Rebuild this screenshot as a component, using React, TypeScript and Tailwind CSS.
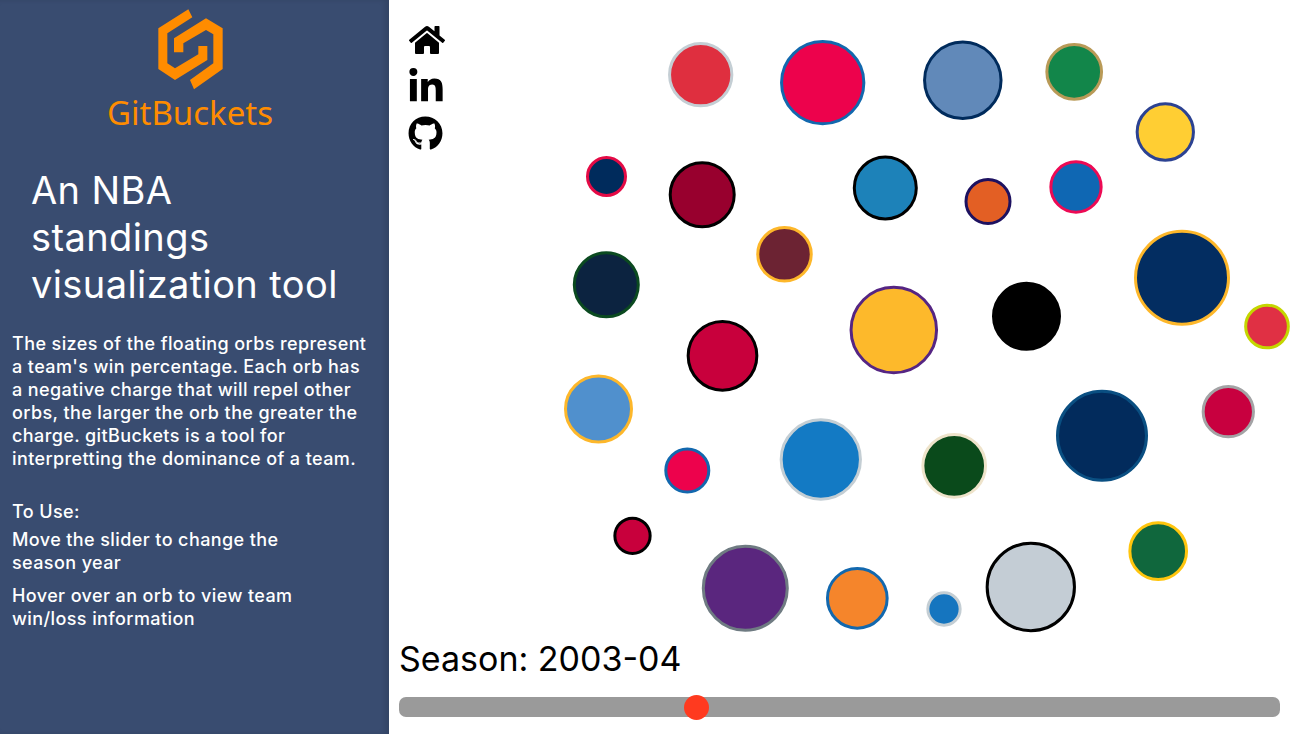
import { FaGithub, FaHome, FaLinkedinIn } from "react-icons/fa";

const FONT = "font-['Inter','Noto_Sans',sans-serif]";

// x/y are page coordinates minus the sidebar width, d is the outer diameter
const orbs = [
    { x: 311.7, y: 74.7, d: 65.3, fill: "#DF2F3F", stroke: "#C4CED4" },
    { x: 433.7, y: 82.7, d: 85.3, fill: "#ED024C", stroke: "#1268AE" },
    { x: 573.8, y: 80.3, d: 79.5, fill: "#6189B9", stroke: "#002B5C" },
    { x: 685.2, y: 71.8, d: 57.7, fill: "#12864A", stroke: "#B99A57" },
    { x: 776.3, y: 132, d: 59.3, fill: "#FFCE33", stroke: "#2C4292" },
    { x: 217.5, y: 176.5, d: 41, fill: "#002B5C", stroke: "#E40A45" },
    { x: 313.2, y: 194.8, d: 67, fill: "#98002E", stroke: "#000000" },
    { x: 496.3, y: 188, d: 65, fill: "#1D82B9", stroke: "#000000" },
    { x: 599, y: 201.5, d: 47, fill: "#E35F24", stroke: "#1D1160" },
    { x: 687, y: 187, d: 53.3, fill: "#0F67B3", stroke: "#ED0A54" },
    { x: 395.5, y: 254.3, d: 56.5, fill: "#6C2333", stroke: "#FDB72A" },
    { x: 217.3, y: 284.7, d: 67, fill: "#0C2340", stroke: "#0B4A20" },
    { x: 793, y: 277.7, d: 96, fill: "#032D61", stroke: "#FDB72A" },
    { x: 878, y: 326.5, d: 45.7, fill: "#E03044", stroke: "#C4D600" },
    { x: 504.8, y: 330, d: 88.5, fill: "#FDB92B", stroke: "#552583" },
    { x: 637.5, y: 316.3, d: 69, fill: "#000000", stroke: "#000000" },
    { x: 333.5, y: 355.8, d: 71.7, fill: "#C8003C", stroke: "#000000" },
    { x: 209.5, y: 409, d: 69, fill: "#5090CD", stroke: "#FDB72A" },
    { x: 298.3, y: 470.5, d: 46, fill: "#ED024C", stroke: "#1268AE" },
    { x: 431.8, y: 459.5, d: 82.3, fill: "#137AC4", stroke: "#C4CED4" },
    { x: 565.2, y: 465.8, d: 65.7, fill: "#0A4A1B", stroke: "#EEE3CA" },
    { x: 713, y: 435.8, d: 92, fill: "#022B5C", stroke: "#0A4F82" },
    { x: 839.3, y: 411.7, d: 53.3, fill: "#C8003F", stroke: "#A3A3A5" },
    { x: 243.5, y: 535.8, d: 38.3, fill: "#C8003C", stroke: "#000000" },
    { x: 356.3, y: 588.3, d: 87, fill: "#5A267E", stroke: "#6F7B82" },
    { x: 468.3, y: 598.3, d: 62.7, fill: "#F5852B", stroke: "#1268AE" },
    { x: 555, y: 609, d: 35.3, fill: "#1575BF", stroke: "#C4CED4" },
    { x: 641.8, y: 587, d: 90.3, fill: "#C4CDD5", stroke: "#000000" },
    { x: 769.2, y: 551.2, d: 59.7, fill: "#10673D", stroke: "#FFC50D" },
];

function Logo() {
    return (
        <svg viewBox="0 0 360 300" className="w-[120px] h-[100px] shrink-0" fill="#FF8C00">
            <polygon points="175,28 85,85 85,207 135,240 232,180 232,138 205,138 205,163 135,205 112,190 112,100 187,52" />
            <polygon points="180,240 192,268 278,207 278,85 228,55 132,115 132,157 160,157 160,130 228,90 250,103 250,190" />
        </svg>
    );
}

export default function App() {
    return (
        <div className={`flex w-[1308px] h-[734px] overflow-hidden bg-white ${FONT}`}>
            <aside className="w-[389px] shrink-0 bg-[#394C70] text-white shadow-[inset_-4px_0_5px_rgba(0,0,0,0.1)]">
                <div className="flex flex-col items-center pr-[9px]">
                    <Logo />
                    <div className="font-['Noto_Sans',sans-serif] text-[33px] leading-[32px] text-[#FF8C00] -mt-[3px]">GitBuckets</div>
                </div>

                <h1 className="mt-[38px] pl-[31px] text-[38px] leading-[47px] font-normal tracking-[0.4px]">
                    An NBA<br />standings<br />visualization tool
                </h1>

                <p className="mt-[24px] pl-[12px] text-[18px] leading-[23px] font-medium tracking-[0.4px] whitespace-nowrap">
                    The sizes of the floating orbs represent<br />
                    a team's win percentage. Each orb has<br />
                    a negative charge that will repel other<br />
                    orbs, the larger the orb the greater the<br />
                    charge. gitBuckets is a tool for<br />
                    interpretting the dominance of a team.
                </p>

                <p className="mt-[30px] pl-[12px] text-[18px] leading-[23px] font-medium tracking-[0.4px]">To Use:</p>
                <p className="mt-[5px] pl-[12px] text-[18px] leading-[23px] font-medium tracking-[0.4px]">
                    Move the slider to change the<br />season year
                </p>
                <p className="mt-[10px] pl-[12px] text-[18px] leading-[23px] font-medium tracking-[0.4px]">
                    Hover over an orb to view team<br />win/loss information
                </p>
            </aside>

            <main className="relative flex-1 flex flex-col">
                <div className="absolute left-[18px] top-[16px] flex flex-col items-center w-[40px] text-black">
                    <a href="#" className="h-[47px] flex items-center justify-center"><FaHome size={36} /></a>
                    <a href="#" className="h-[47px] flex items-center justify-center pt-[1px] -ml-[3px]"><FaLinkedinIn size={38} /></a>
                    <a href="#" className="h-[47px] flex items-center justify-center -ml-[4px]"><FaGithub size={35} /></a>
                </div>

                <svg viewBox="0 0 919 638" className="w-[919px] h-[638px] shrink-0">
                    {orbs.map((o, i) => (
                        <circle key={i} cx={o.x} cy={o.y} r={o.d / 2 - 1.5} fill={o.fill} stroke={o.stroke} strokeWidth={3} />
                    ))}
                </svg>

                <div className="pl-[10px] text-[34px] leading-[42px] text-black">Season: 2003-04</div>

                <div className="relative mt-[17px] ml-[10px] w-[881px] h-[20px] rounded-[7px] bg-[#9A9A9A]">
                    <div className="absolute left-[285px] top-[-2px] w-[25px] h-[25px] rounded-full bg-[#FF3A1F]" />
                </div>
            </main>
        </div>
    );
}
